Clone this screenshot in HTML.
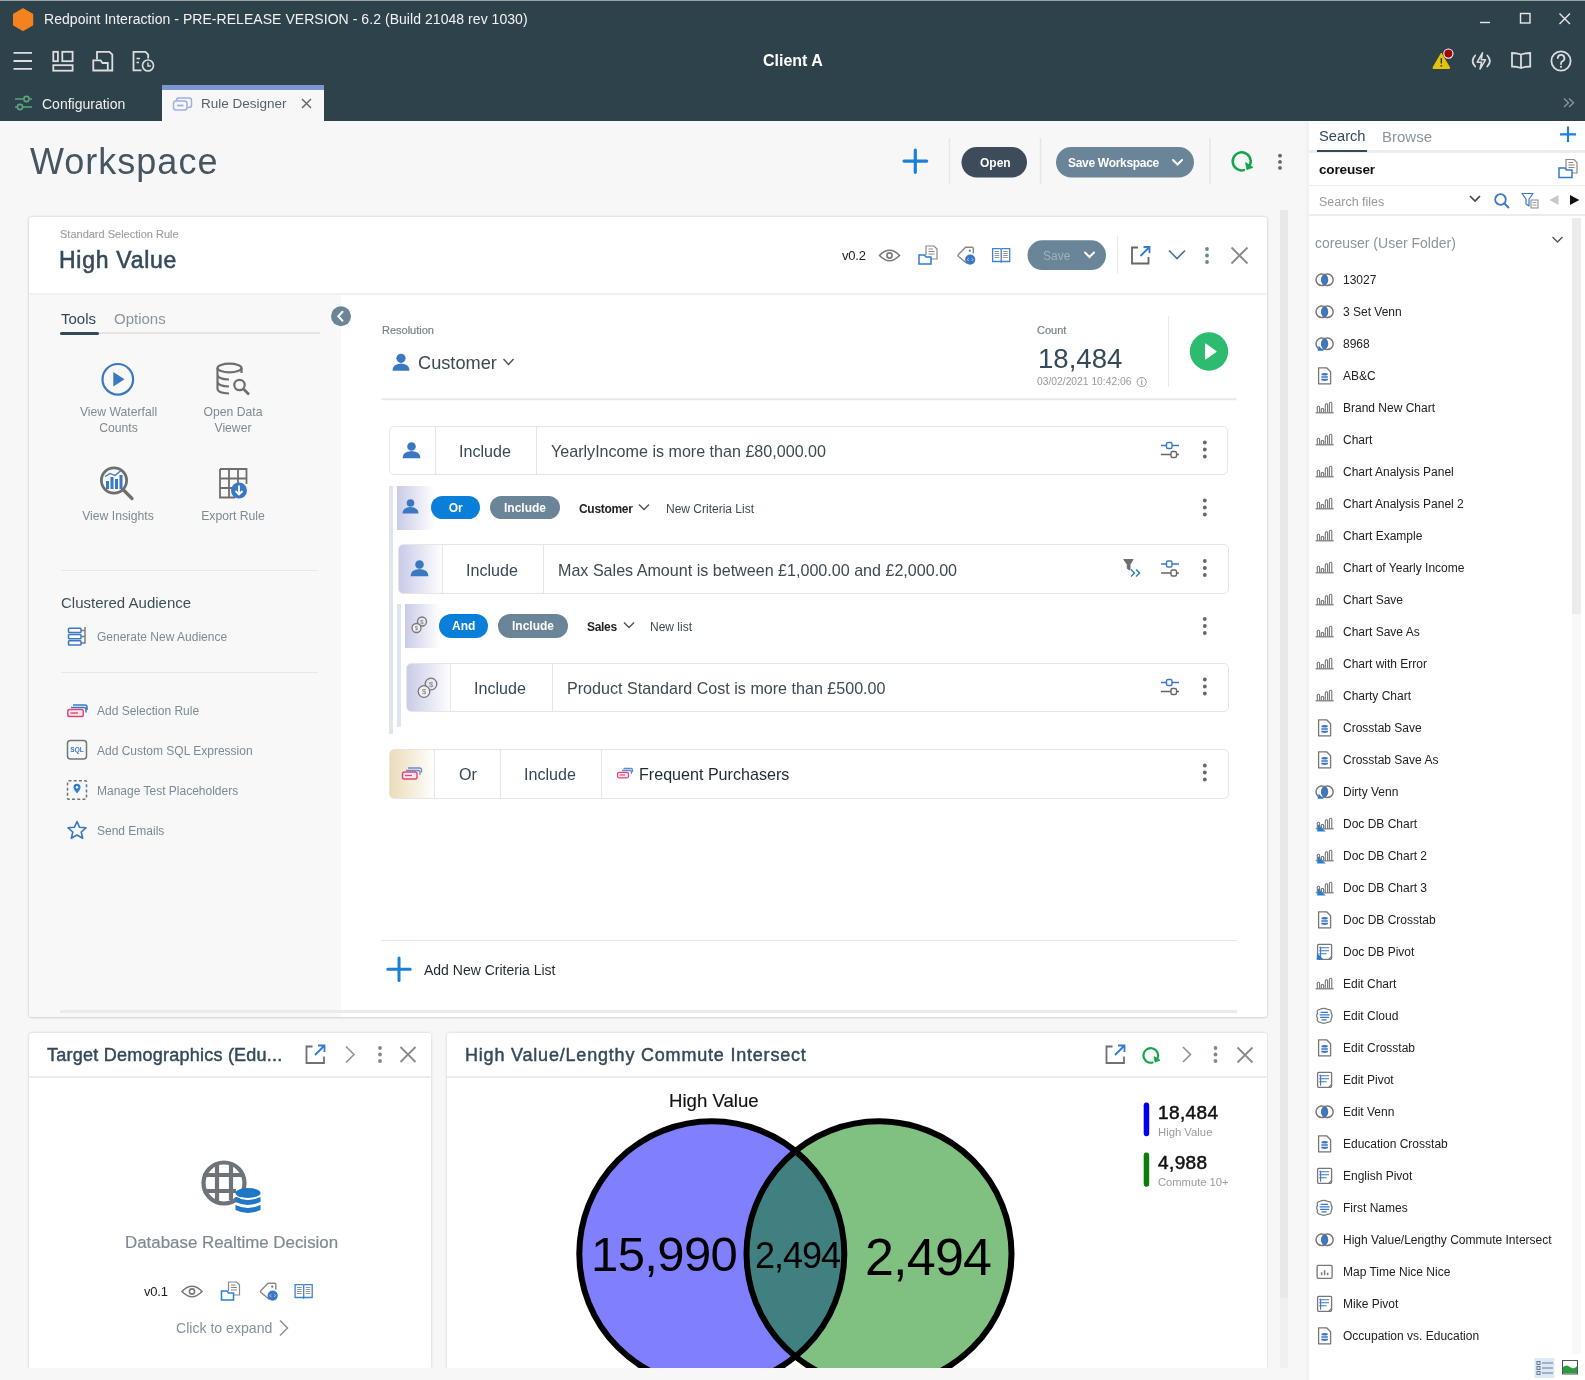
<!DOCTYPE html>
<html><head><meta charset="utf-8">
<style>
*{margin:0;padding:0;box-sizing:border-box}
html,body{width:1585px;height:1380px;overflow:hidden;background:#f7f7f7;font-family:"Liberation Sans",sans-serif}
.a{position:absolute}
.t{position:absolute;white-space:nowrap;line-height:1;will-change:transform}
svg{position:absolute;overflow:visible}
</style></head><body>
<!-- HEADER -->
<div class="a" style="left:0;top:0;width:1585px;height:121px;background:#2e424b"></div>
<div class="a" style="left:0;top:0;width:1585px;height:1px;background:#9aa3a8"></div>

<svg style="left:0;top:0" width="40" height="40"><path d="M23 8.8 L32.6 14.3 L32.6 25 L23 30.4 L13.6 25 L13.6 14.3 Z" fill="#f5821f" stroke="#f5821f" stroke-width="1.2" stroke-linejoin="round"/></svg>
<div class="t" style="left:43.5px;top:11.8px;font-size:14px;color:#f2f2f2;letter-spacing:0.05px">Redpoint Interaction - PRE-RELEASE VERSION - 6.2 (Build 21048 rev 1030)</div>
<svg style="left:0;top:0" width="1585" height="40"><g stroke="#e8e8e8" stroke-width="1.4" fill="none"><path d="M1480 22.5 H1490"/><rect x="1520.5" y="13.5" width="9.5" height="9.5"/><path d="M1559.5 13.5 L1570 24 M1570 13.5 L1559.5 24"/></g></svg>
<!-- toolbar icons left -->
<svg style="left:0;top:0" width="200" height="85"><g stroke="#dedede" stroke-width="1.8" fill="none">
<path d="M13.5 52.8 H32 M13.5 61 H32 M13.5 68.8 H32"/>
<rect x="53.3" y="51.8" width="4.6" height="9.4"/><rect x="62.3" y="51.8" width="10.3" height="9.4"/><rect x="53.3" y="65.2" width="19.3" height="5.5"/>
<path d="M97 59.5 V51.8 H109.5 L112.3 54.6 V70.5 H108.5"/><path d="M93.3 70.5 V60.3 H100.5 L102.5 63 H107.8 V70.5 Z"/>
<path d="M141.5 70.3 H133.5 V51.8 H145.5 L148.2 54.5 V58.5"/><path d="M136.5 58.5 H140 M136.5 62.5 H139" stroke-width="1.5"/><circle cx="148" cy="65.5" r="5.5" stroke-width="1.6"/><path d="M148 62.5 V66 H150.8" stroke-width="1.4"/>
</g></svg>
<div class="t" style="left:763px;top:52.5px;font-size:16px;color:#fff;font-weight:bold">Client A</div>
<!-- right toolbar icons -->
<svg style="left:0;top:0" width="1585" height="85">
<path d="M1441.3 53.5 L1449.3 67.3 Q1449.8 68.5 1448.5 68.5 H1434.1 Q1432.8 68.5 1433.3 67.3 Z" fill="#e3c30c" stroke="#e3c30c" stroke-width="1.2" stroke-linejoin="round"/>
<path d="M1441.3 58 V63.5" stroke="#2e424b" stroke-width="1.5"/><circle cx="1441.3" cy="65.8" r="0.9" fill="#2e424b"/>
<circle cx="1448.4" cy="53.6" r="4.6" fill="#a50000" stroke="#fff" stroke-width="1.1"/>
<g stroke="#dcdcdc" stroke-width="1.8" fill="none" stroke-linecap="round">
<path d="M1475.2 55.5 Q1470 61 1475.2 66.5 M1487.3 55.5 Q1492.5 61 1487.3 66.5"/>
<path d="M1482.5 52.8 L1477.2 62.2 H1481.6 L1480 69 L1485.5 59.8 H1481.2 Z" stroke-width="1.5" stroke-linejoin="round"/>
<path d="M1521 54.5 Q1517 53 1512 53 V66.5 Q1517 66.5 1521 68 Q1525 66.5 1530.2 66.5 V53 Q1525 53 1521 54.5 V68"/>
<circle cx="1561" cy="61" r="9.6"/><path d="M1557.8 58 A3.3 3.3 0 1 1 1562.3 61.3 Q1561 62 1561 64"/></g>
<circle cx="1561" cy="66.8" r="1.1" fill="#dcdcdc"/>
</svg>

<!-- TABS -->

<svg style="left:0;top:0" width="40" height="120"><g stroke="#5fa37f" stroke-width="1.6" fill="none"><path d="M15 99 H23 M29.5 99 H32 M15 107 H17 M23 107 H32"/><circle cx="26.5" cy="99" r="2.6"/><circle cx="20" cy="107" r="2.6"/></g></svg>
<div class="t" style="left:42px;top:96.5px;font-size:14px;color:#f0f0f0">Configuration</div>
<div class="a" style="left:162px;top:85px;width:162px;height:36px;background:#f7f7f7;border-top:5px solid #7b96d4"></div>
<svg style="left:0;top:0" width="340" height="120"><g stroke="#9fb2e3" stroke-width="1.5" fill="none"><rect x="173.5" y="101" width="13.5" height="9" rx="2.5"/><path d="M177 98 H189 Q191.5 98 191.5 100.5 V105 Q191.5 107.5 189 107.5 H187.5 M176.5 101 V100.5 Q176.5 98 179 98"/><path d="M177 105.5 H183.5" stroke-width="1.8"/></g></svg>
<div class="t" style="left:200.5px;top:96.8px;font-size:13.5px;color:#56636c">Rule Designer</div>
<svg style="left:0;top:0" width="340" height="120"><path d="M302 99 L311 108 M311 99 L302 108" stroke="#6a6a6a" stroke-width="1.5"/></svg>
<svg style="left:0;top:0" width="1585" height="120"><path d="M1564 98.5 L1568.5 102.8 L1564 107 M1569 98.5 L1573.5 102.8 L1569 107" stroke="#8a959c" stroke-width="1.4" fill="none"/></svg>

<!-- MAIN -->

<div class="t" style="left:30px;top:144.3px;font-size:36px;color:#455662;letter-spacing:1px">Workspace</div>
<svg style="left:0;top:0" width="1300" height="200">
<path d="M915.3 150 V172.3 M904 161.1 H926.7" stroke="#1a80d8" stroke-width="3.2" stroke-linecap="round"/>
<path d="M949.5 138 V184 M1040.5 138 V184 M1210 138 V184" stroke="#e6e6e6" stroke-width="1.5"/>
<rect x="961.5" y="147" width="65.5" height="30.5" rx="15.25" fill="#3e4b5a"/>
<rect x="1056" y="147" width="138" height="30.5" rx="15.25" fill="#6a8597"/>
<path d="M1173 160 L1177.5 164.5 L1182 160" stroke="#fff" stroke-width="2" fill="none" stroke-linecap="round"/>
<path d="M1243.9 170.1 A9 9 0 1 1 1250.1 164.6" stroke="#12a64c" stroke-width="2.5" fill="none" stroke-linecap="round"/>
<path d="M1245.6 162.6 L1253 167.4 L1246.8 169.6 Z" fill="#12a64c" stroke="#12a64c" stroke-width="0.8" stroke-linejoin="round"/>
<circle cx="1280" cy="155.7" r="1.9" fill="#666"/><circle cx="1280" cy="161.9" r="1.9" fill="#666"/><circle cx="1280" cy="167.9" r="1.9" fill="#666"/>
</svg>
<div class="t" style="left:980px;top:157px;font-size:12px;color:#fff;font-weight:bold">Open</div>
<div class="t" style="left:1068px;top:157px;font-size:12px;letter-spacing:-0.3px;color:#fff;font-weight:bold">Save Workspace</div>
<!-- CARD -->
<div class="a" style="left:29px;top:217px;width:1238px;height:800px;background:#fff;border-radius:3px;box-shadow:0 0 3px rgba(0,0,0,.18),0 1px 2px rgba(0,0,0,.08)"></div>
<div class="a" style="left:29px;top:293px;width:312px;height:724px;background:#f8f8f8;border-top:2px solid #f1f1f1;border-radius:0 0 0 3px"></div>
<div class="a" style="left:341px;top:293px;width:926px;height:2px;background:#f1f1f1"></div>
<div class="t" style="left:60px;top:228.5px;font-size:11px;color:#a0a0a0;-webkit-text-stroke:0.15px #a0a0a0">Standard Selection Rule</div>
<div class="t" style="left:59px;top:249.3px;font-size:23px;color:#34495a;-webkit-text-stroke:0.55px #34495a;letter-spacing:0.72px">High Value</div>

<div class="a" style="left:1279.8px;top:210px;width:8px;height:1088px;background:#e8e8e8"></div>
<div class="a" style="left:1279.8px;top:1298px;width:8px;height:70px;background:#f0f0f0"></div>
<div class="t" style="left:842.3px;top:249.3px;font-size:13px;color:#222;letter-spacing:-0.2px">v0.2</div>
<svg style="left:0;top:0" width="1300" height="300">
<g id="vicons"><g fill="none" stroke="#7a7a7a" stroke-width="1.6"><path d="M879.5 255.5 Q889.5 245 899.5 255.5 Q889.5 266 879.5 255.5 Z"/><circle cx="889.5" cy="255.5" r="2.6"/></g>
<g fill="none" stroke="#888" stroke-width="1.2"><path d="M926 255 V246 H934 L937 249 V259 H931 M928.5 249 H933 M928.5 251.5 H934.5 M928.5 254 H934.5"/></g>
<path d="M919 264 V255 H924.5 L926 257 H931 V264 Z" fill="#fff" stroke="#2f7dd0" stroke-width="1.5"/>
<path d="M967 263.5 L958.5 256.5 Q957.5 255.5 958.5 254.5 L965.5 247.3 H972 Q973.3 247.3 973.3 248.6 V253.5" fill="none" stroke="#888" stroke-width="1.4" stroke-linejoin="round"/><circle cx="969.8" cy="250.7" r="1.1" fill="#777"/>
<circle cx="970.2" cy="259.6" r="5.1" fill="#3a78c6"/><path d="M968.6 258.3 L967.4 259.6 L968.6 260.9 M971.8 258.3 L973 259.6 L971.8 260.9" stroke="#dfe9f7" stroke-width="0.8" fill="none"/>
<g fill="none" stroke="#3a84d4" stroke-width="1.3"><path d="M992.6 248.6 H1000.2 Q1001.2 248.6 1001.2 249.6 V261.5 H992.6 Z M1001.2 249.6 Q1001.2 248.6 1002.2 248.6 H1009.7 V261.5 H1001.2"/><path d="M994.5 251.5 H999.2 M994.5 253.5 H999.2 M994.5 255.5 H999.2 M994.5 257.5 H999.2 M1003.2 251.5 H1007.8 M1003.2 253.5 H1007.8 M1003.2 255.5 H1007.8 M1003.2 257.5 H1007.8" stroke="#888" stroke-width="0.9"/></g><path d="M999.8 261.5 L1001.2 263 L1002.6 261.5" fill="#3a84d4"/></g>
<rect x="1027.5" y="240.3" width="78.5" height="29.7" rx="14.85" fill="#6a8597"/>
<path d="M1085 252.5 L1089.5 257 L1094 252.5" stroke="#fff" stroke-width="2" fill="none" stroke-linecap="round"/>
<path d="M1117.5 236 V273.5" stroke="#e8e8e8" stroke-width="1"/>
<g fill="none" stroke="#666" stroke-width="1.8"><path d="M1138 247.5 H1132 V263.5 H1148.5 V257"/></g>
<path d="M1140.5 256 L1149 247.5 M1143.5 247 H1149.5 V253" fill="none" stroke="#2f7dd0" stroke-width="1.8"/>
<path d="M1169 250.5 L1177 258.5 L1185 250.5" fill="none" stroke="#4f6f8f" stroke-width="1.7"/>
<circle cx="1207" cy="249" r="1.9" fill="#6a8597"/><circle cx="1207" cy="255.5" r="1.9" fill="#6a8597"/><circle cx="1207" cy="262" r="1.9" fill="#6a8597"/>
<path d="M1231.5 247.5 L1247.5 263.5 M1247.5 247.5 L1231.5 263.5" stroke="#8a8a8a" stroke-width="1.8"/>
</svg>
<div class="t" style="left:1043px;top:250px;font-size:12px;color:#9fb1bd">Save</div>


<div class="t" style="left:61px;top:310.5px;font-size:15px;color:#34495a">Tools</div>
<div class="t" style="left:114px;top:310.5px;font-size:15px;color:#8a959e">Options</div>
<div class="a" style="left:60px;top:331.5px;width:260px;height:2.5px;background:#e4e4e4"></div>
<div class="a" style="left:60px;top:331.5px;width:39px;height:3px;background:#34495a;border-radius:1.5px"></div>
<svg style="left:0;top:0" width="360" height="1020">
<circle cx="341" cy="316.3" r="10" fill="#6a8597"/><path d="M342.5 311.8 L338.3 316.3 L342.5 320.8" stroke="#fff" stroke-width="2" fill="none" stroke-linecap="round"/>
<circle cx="117.8" cy="379.3" r="15.3" fill="none" stroke="#3b78c2" stroke-width="2.2"/><path d="M113.3 372 L124.5 379.3 L113.3 386.6 Z" fill="#3b78c2"/>
<g fill="none" stroke="#6e6e6e" stroke-width="2.2">
<ellipse cx="229.5" cy="368" rx="12" ry="4.3"/><path d="M217.5 368 V389 Q217.5 393 229 393.5 M217.5 375 Q218 379 229 379.5 M217.5 382 Q218 386 229 386.5 M241.5 368 V373"/>
<circle cx="239.5" cy="385" r="5.2"/><path d="M243.5 389 L249 394.5" stroke-width="2.6"/>
<circle cx="114" cy="480.5" r="12.6" stroke-width="2.8"/><path d="M123 489.5 L132 498.5" stroke-width="3.2" stroke-linecap="round"/>
<path d="M220 469 H246.5 V484 M220 469 V497.5 H235 M220 478.5 H246.5 M220 488 H235 M229 469 V497.5 M238 469 V484" stroke-width="1.8"/>
</g>
<g fill="#3b78c2"><rect x="106" y="481" width="3" height="8"/><rect x="110.5" y="477" width="3" height="12"/><rect x="115" y="479" width="3" height="10"/><rect x="119.5" y="475" width="3" height="14"/></g>
<path d="M105 476.5 L110 473.5 L115 475.5 L121 470.5" stroke="#3b78c2" stroke-width="1.3" fill="none"/>
<circle cx="239" cy="490.5" r="8" fill="#3b78c2"/><path d="M239 485.5 V494.5 M235.5 491 L239 494.5 L242.5 491" stroke="#fff" stroke-width="1.8" fill="none"/>
</svg>
<div class="t" style="left:78.5px;top:403.5px;font-size:12.2px;color:#7d8a94;text-align:center;width:79px;line-height:16px">View Waterfall<br>Counts</div>
<div class="t" style="left:193px;top:403.5px;font-size:12.2px;color:#7d8a94;text-align:center;width:80px;line-height:16px">Open Data<br>Viewer</div>
<div class="t" style="left:68px;top:509.5px;font-size:12.2px;color:#7d8a94;text-align:center;width:100px">View Insights</div>
<div class="t" style="left:183px;top:509.5px;font-size:12.2px;color:#7d8a94;text-align:center;width:100px">Export Rule</div>
<div class="a" style="left:61px;top:569.5px;width:257px;height:1.5px;background:#e8e8e8"></div>
<div class="t" style="left:61px;top:594.5px;font-size:15px;color:#3d4f5b">Clustered Audience</div>
<div class="a" style="left:61px;top:671.5px;width:257px;height:1.5px;background:#e8e8e8"></div>
<div class="t" style="left:97px;top:631.2px;font-size:12px;color:#7d8a94">Generate New Audience</div>
<div class="t" style="left:97px;top:704.7px;font-size:12px;color:#7d8a94">Add Selection Rule</div>
<div class="t" style="left:97px;top:744.7px;font-size:12px;color:#7d8a94">Add Custom SQL Expression</div>
<div class="t" style="left:97px;top:784.7px;font-size:12px;color:#7d8a94">Manage Test Placeholders</div>
<div class="t" style="left:97px;top:824.7px;font-size:12px;color:#7d8a94">Send Emails</div>
<svg style="left:0;top:0" width="360" height="1020">
<g fill="none" stroke="#3b78c2" stroke-width="1.5">
<rect x="68.5" y="628.3" width="12.5" height="4.3" rx="0.8"/><rect x="68.5" y="634.5" width="12.5" height="4.3" rx="0.8"/><rect x="68.5" y="640.7" width="12.5" height="4.3" rx="0.8"/><path d="M81 630.5 H85 V643 H81 M85 636.5 H81 M85 627 V630.5" stroke="#7a7f84"/>
<path d="M71 707.5 H84 Q86 707.5 86 709.5 V712.5 M73 705 H85 Q87 705 87 707 V710"/>
</g>
<rect x="67.8" y="709.5" width="15.5" height="7" rx="1.8" fill="#fde8ee" stroke="#e0457b" stroke-width="1.5"/><path d="M70.5 713 H78" stroke="#e0457b" stroke-width="1.4"/>
<rect x="67.5" y="740.5" width="19" height="18.5" rx="3" fill="none" stroke="#6f757a" stroke-width="1.5"/>
<text x="77" y="752.3" font-size="6.5" font-weight="bold" fill="#3b78c2" text-anchor="middle" font-family="Liberation Sans">SQL</text>
<rect x="67.5" y="780.8" width="19" height="18.5" rx="1" fill="none" stroke="#6f757a" stroke-width="1.5" stroke-dasharray="3 2.2"/>
<path d="M77 793.5 Q73.5 789.5 73.5 787.3 A3.5 3.5 0 0 1 80.5 787.3 Q80.5 789.5 77 793.5 Z" fill="#2f7dd0"/><circle cx="77" cy="787.3" r="1.2" fill="#fff"/>
<path d="M77 821.5 L79.6 827.3 L86 827.8 L81.2 832 L82.7 838.3 L77 835 L71.3 838.3 L72.8 832 L68 827.8 L74.4 827.3 Z" fill="none" stroke="#3b78c2" stroke-width="1.6" stroke-linejoin="round"/>
</svg>
<div class="a" style="left:60px;top:1010px;width:1177px;height:3px;background:#ebebeb"></div>


<div class="t" style="left:381.5px;top:324.5px;font-size:11px;color:#77838d;-webkit-text-stroke:0.2px #77838d">Resolution</div>
<svg style="left:0;top:0" width="1300" height="1000">
<g fill="#3b78c2"><circle cx="401" cy="358.3" r="4.6"/><path d="M392.5 370.8 Q392.5 364 401 363.5 Q409.5 364 409.5 370.8 Z"/></g>
<path d="M503.5 359 L508.5 364.5 L513.5 359" stroke="#555" stroke-width="1.5" fill="none"/>
<path d="M381.5 399.3 H1236.5" stroke="#e8e8e8" stroke-width="2"/>
<path d="M1168.6 316 V386.8" stroke="#e8e8e8" stroke-width="1"/>
<circle cx="1209" cy="351.5" r="19.2" fill="#2dbb6f"/><path d="M1205.5 343.8 L1216.3 351.5 L1205.5 359.2 Z" fill="#fff" stroke="#fff" stroke-width="1" stroke-linejoin="round"/>
<circle cx="1141.7" cy="382" r="4.6" fill="none" stroke="#999" stroke-width="1"/><path d="M1141.7 380.5 V385" stroke="#999" stroke-width="1.1"/><circle cx="1141.7" cy="379" r="0.6" fill="#999"/>
</svg>
<div class="t" style="left:417.5px;top:354px;font-size:18.2px;color:#3a4a56">Customer</div>
<div class="t" style="left:1037.3px;top:324.8px;font-size:11px;color:#77838d;-webkit-text-stroke:0.2px #77838d">Count</div>
<div class="t" style="left:1037.5px;top:344.5px;font-size:27.6px;color:#34495a">18,484</div>
<div class="t" style="left:1037.3px;top:377.3px;font-size:10.3px;color:#9a9a9a">03/02/2021 10:42:06</div>

<!-- row 1 -->
<div class="a" style="left:389.2px;top:425.5px;width:839.3px;height:49.5px;border:1px solid #e6e6e6;border-radius:5px;background:#fff"></div>
<div class="a" style="left:434.5px;top:426px;width:1px;height:48.5px;background:#e6e6e6"></div>
<div class="a" style="left:535.5px;top:426px;width:1px;height:48.5px;background:#e6e6e6"></div>
<div class="t" style="left:458.5px;top:443.2px;font-size:16.1px;color:#34495a">Include</div>
<div class="t" style="left:550.5px;top:443.2px;font-size:16.1px;color:#3d4a55">YearlyIncome is more than £80,000.00</div>

<!-- group bars -->
<div class="a" style="left:389.3px;top:486px;width:3.6px;height:248px;background:#dfe5ee"></div>
<div class="a" style="left:397.4px;top:604px;width:3.4px;height:123px;background:#dfe5ee"></div>

<!-- row 2 header -->
<div class="a" style="left:397px;top:486px;width:38px;height:44px;background:linear-gradient(90deg,#c9cbe8,#fff)"></div>
<div class="a" style="left:430.8px;top:495.8px;width:49.5px;height:23.6px;border-radius:12px;background:#0a7fd9"></div>
<div class="a" style="left:490px;top:495.8px;width:70px;height:23.6px;border-radius:12px;background:#6a8597"></div>
<div class="t" style="left:430.8px;top:502.3px;width:49.5px;text-align:center;font-size:12px;color:#fff;font-weight:bold">Or</div>
<div class="t" style="left:490px;top:502.3px;width:70px;text-align:center;font-size:12px;color:#fff;font-weight:bold">Include</div>
<div class="t" style="left:578.5px;top:502.5px;font-size:12px;color:#222;font-weight:bold;letter-spacing:-0.3px">Customer</div>
<div class="t" style="left:665.5px;top:502.5px;font-size:12px;color:#3d4a55">New Criteria List</div>

<!-- row 3 -->
<div class="a" style="left:397.8px;top:543.5px;width:831px;height:50px;border:1px solid #e6e6e6;border-radius:5px;background:#fff;overflow:hidden"><div class="a" style="left:0;top:0;width:44px;height:50px;background:linear-gradient(90deg,#c9cbe8,#fff)"></div></div>
<div class="a" style="left:441.9px;top:544px;width:1px;height:49px;background:#e6e6e6"></div>
<div class="a" style="left:543.2px;top:544px;width:1px;height:49px;background:#e6e6e6"></div>
<div class="t" style="left:466.3px;top:561.7px;font-size:16.1px;color:#34495a">Include</div>
<div class="t" style="left:558.3px;top:561.7px;font-size:16.1px;color:#3d4a55">Max Sales Amount is between £1,000.00 and £2,000.00</div>

<!-- row 4 header -->
<div class="a" style="left:405px;top:604.2px;width:35px;height:43.5px;background:linear-gradient(90deg,#c9cbe8,#fff)"></div>
<div class="a" style="left:438.6px;top:613.6px;width:49.4px;height:24px;border-radius:12px;background:#0a7fd9"></div>
<div class="a" style="left:498px;top:613.6px;width:70px;height:24px;border-radius:12px;background:#6a8597"></div>
<div class="t" style="left:438.6px;top:620.3px;width:49.4px;text-align:center;font-size:12px;color:#fff;font-weight:bold">And</div>
<div class="t" style="left:498px;top:620.3px;width:70px;text-align:center;font-size:12px;color:#fff;font-weight:bold">Include</div>
<div class="t" style="left:586.7px;top:620.5px;font-size:12px;color:#222;font-weight:bold;letter-spacing:-0.3px">Sales</div>
<div class="t" style="left:650.3px;top:620.5px;font-size:12px;color:#3d4a55">New list</div>

<!-- row 5 -->
<div class="a" style="left:405.8px;top:662.5px;width:823px;height:49.5px;border:1px solid #e6e6e6;border-radius:5px;background:#fff;overflow:hidden"><div class="a" style="left:0;top:0;width:44px;height:50px;background:linear-gradient(90deg,#c9cbe8,#fff)"></div></div>
<div class="a" style="left:450.3px;top:663px;width:1px;height:48.5px;background:#e6e6e6"></div>
<div class="a" style="left:551.6px;top:663px;width:1px;height:48.5px;background:#e6e6e6"></div>
<div class="t" style="left:474.3px;top:680.2px;font-size:16.1px;color:#34495a">Include</div>
<div class="t" style="left:566.7px;top:680.2px;font-size:16.1px;color:#3d4a55">Product Standard Cost is more than £500.00</div>

<!-- row 6 -->
<div class="a" style="left:389.4px;top:748.5px;width:839.5px;height:50px;border:1px solid #e6e6e6;border-radius:5px;background:#fff;overflow:hidden"><div class="a" style="left:0;top:0;width:45px;height:50px;background:linear-gradient(90deg,#ecdcb8,#fff)"></div></div>
<div class="a" style="left:434.2px;top:749px;width:1px;height:49px;background:#e6e6e6"></div>
<div class="a" style="left:499.8px;top:749px;width:1px;height:49px;background:#e6e6e6"></div>
<div class="a" style="left:600.8px;top:749px;width:1px;height:49px;background:#e6e6e6"></div>
<div class="t" style="left:458.6px;top:766.2px;font-size:16.1px;color:#34495a">Or</div>
<div class="t" style="left:523.8px;top:766.2px;font-size:16.1px;color:#34495a">Include</div>
<div class="t" style="left:639.2px;top:766.2px;font-size:16.1px;color:#1f2a33">Frequent Purchasers</div>

<svg style="left:0;top:0" width="1300" height="1000">
<!-- person icons -->
<g fill="#3b78c2"><circle cx="411.5" cy="446.5" r="4.3"/><path d="M402.5 458.3 Q402.5 451.5 411.5 451 Q420.5 451.5 420.5 458.3 Z"/>
<circle cx="410.5" cy="503" r="3.8"/><path d="M402.5 513.5 Q402.5 507.5 410.5 507 Q418.5 507.5 418.5 513.5 Z"/>
<circle cx="419.5" cy="564.5" r="4.3"/><path d="M410.5 576.3 Q410.5 569.5 419.5 569 Q428.5 569.5 428.5 576.3 Z"/></g>
<!-- coins -->
<g fill="none" stroke="#777" stroke-width="1.3"><circle cx="422" cy="621.5" r="4.5"/><circle cx="416.5" cy="628" r="4.5" fill="#f0f0f4"/>
<circle cx="431" cy="684" r="5.8"/><circle cx="424" cy="691.5" r="5.8" fill="#f0f0f4"/></g>
<g font-family="Liberation Sans" font-size="6" fill="#777" text-anchor="middle"><text x="422" y="623.7">$</text><text x="416.5" y="630.2">$</text></g>
<g font-family="Liberation Sans" font-size="7.5" fill="#777" text-anchor="middle"><text x="431" y="686.7">$</text><text x="424" y="694.2">$</text></g>
<!-- selection rule icons -->
<g fill="none" stroke="#6b8bd0" stroke-width="1.3"><path d="M406 770.5 H418 Q420 770.5 420 772.5 V775 M408 768 H419.5 Q421.5 768 421.5 770 V772.5"/>
<path d="M622 770.5 H630 Q631.5 770.5 631.5 772 V774 M623.5 768.5 H631 Q632.5 768.5 632.5 770 V772"/></g>
<rect x="402.5" y="772" width="14.5" height="7" rx="1.8" fill="#fde8ee" stroke="#e0457b" stroke-width="1.4"/><path d="M405 775.5 H412" stroke="#e0457b" stroke-width="1.3"/>
<rect x="617.5" y="772.3" width="11" height="5.5" rx="1.5" fill="#fde8ee" stroke="#e0457b" stroke-width="1.2"/><path d="M619.5 775 H625" stroke="#e0457b" stroke-width="1.1"/>
<!-- chevrons -->
<path d="M639 504.5 L644 509.5 L649 504.5" stroke="#555" stroke-width="1.5" fill="none"/>
<path d="M624 622.5 L629 627.5 L634 622.5" stroke="#555" stroke-width="1.5" fill="none"/>
<!-- sliders -->
<g id="sl"><path d="M1161 445.5 H1166.5 M1172 445.5 H1179" stroke="#3b78c2" stroke-width="1.5"/><rect x="1166.5" y="442.5" width="5.5" height="6" rx="1.5" fill="none" stroke="#3b78c2" stroke-width="1.4"/>
<path d="M1161 454.5 H1171 M1176.5 454.5 H1179" stroke="#666" stroke-width="1.5"/><rect x="1171" y="451.5" width="5.5" height="6" rx="1.5" fill="none" stroke="#666" stroke-width="1.4"/></g>
<use href="#sl" y="118.5"/><use href="#sl" y="237"/>
<!-- kebabs -->
<g id="kb" fill="#666"><circle cx="1204.8" cy="442.5" r="1.9"/><circle cx="1204.8" cy="449.5" r="1.9"/><circle cx="1204.8" cy="456.5" r="1.9"/></g>
<use href="#kb" y="58"/><use href="#kb" y="118.5"/><use href="#kb" y="176.5"/><use href="#kb" y="237"/><use href="#kb" y="323"/>
<!-- filter -->
<path d="M1123.7 559.5 H1133 L1130 564.5 V570 L1127.3 568.5 V564.5 Z" fill="#6e6e6e" stroke="#6e6e6e" stroke-width="1" stroke-linejoin="round"/>
<path d="M1131 569.5 L1134.5 573 L1131 576.5 M1136 569.5 L1139.5 573 L1136 576.5" stroke="#3b78c2" stroke-width="1.5" fill="none"/>
</svg>
<!-- add new criteria -->
<div class="a" style="left:381px;top:939.5px;width:856px;height:1.5px;background:#e8e8e8"></div>
<svg style="left:0;top:0" width="500" height="1000"><path d="M399 958 V980.5 M387.8 969.3 H410.2" stroke="#1a80d8" stroke-width="3" stroke-linecap="round"/></svg>
<div class="t" style="left:424px;top:962.5px;font-size:14px;color:#1f2a33">Add New Criteria List</div>


<!-- RIGHT PANEL -->

<div class="a" style="left:1290px;top:121px;width:19px;height:1259px;background:linear-gradient(90deg,#f7f7f7 0,#f7f7f7 14px,#eef0f2 19px)"></div>
<div class="a" style="left:1309px;top:121px;width:276px;height:1259px;background:#fff"></div>
<div class="t" style="left:1318.5px;top:128.5px;font-size:14.7px;color:#34495a">Search</div>
<div class="t" style="left:1382px;top:128.5px;font-size:15px;color:#8a959e">Browse</div>
<div class="a" style="left:1309px;top:149.8px;width:276px;height:2.8px;background:#ececec"></div>
<div class="a" style="left:1317.4px;top:149.8px;width:50px;height:2px;background:#34495a"></div>
<div class="t" style="left:1318.5px;top:162.8px;font-size:13.6px;color:#111;font-weight:bold;letter-spacing:-0.2px">coreuser</div>
<div class="a" style="left:1309px;top:184.5px;width:276px;height:1.5px;background:#ececec"></div>
<div class="t" style="left:1319px;top:195.5px;font-size:12.5px;color:#9a9a9a">Search files</div>
<div class="a" style="left:1309px;top:214px;width:276px;height:1.5px;background:#ececec"></div>
<div class="a" style="left:1572px;top:218px;width:8.5px;height:396px;background:#ebebeb"></div>
<div class="a" style="left:1572px;top:614px;width:8.5px;height:740px;background:#f8f8f8"></div>
<div class="t" style="left:1315px;top:235.5px;font-size:14px;color:#8a959e">coreuser (User Folder)</div>

<svg style="left:0;top:0" width="1585" height="1380">

<defs>
<g id="i_venn"><circle cx="-2.8" cy="0" r="5.8" fill="none" stroke="#777" stroke-width="1.5"/><circle cx="2.8" cy="0" r="5.8" fill="none" stroke="#777" stroke-width="1.5"/><path d="M0 -4.9 A5.8 5.8 0 0 1 0 4.9 A5.8 5.8 0 0 1 0 -4.9 Z" fill="#3b78c2"/><ellipse cx="0" cy="0" rx="3.3" ry="5" fill="#3b78c2"/></g>
<g id="i_venn_db"><use href="#i_venn"/><path d="M-6 2 L-1 7 H-7 Z" fill="#2f7dd0"/></g>
<g id="i_xtab"><path d="M-6 -8 H2 L6 -4 V8 H-6 Z" fill="#fff" stroke="#777" stroke-width="1.3" stroke-linejoin="round"/><ellipse cx="0" cy="-1.5" rx="3.3" ry="1.3" fill="#3b78c2"/><path d="M-3.3 0.5 H3.3 V2 H-3.3 Z M-3.3 3 H3.3 V4.5 Q0 5.8 -3.3 4.5 Z" fill="#3b78c2"/></g>
<g id="i_chart"><path d="M-9 5 H9" stroke="#777" stroke-width="1.2"/><path d="M-7.3 4.8 V-0.5 Q-7.3 -1.5 -6.2 -1.5 Q-5 -1.5 -5 -0.5 V4.8 M-3.3 4.8 V1.5 Q-3.3 0.5 -2.2 0.5 Q-1 0.5 -1 1.5 V4.8 M0.7 4.8 V-3 Q0.7 -4 1.8 -4 Q3 -4 3 -3 V4.8 M4.8 4.8 V-4.5 Q4.8 -5.5 6 -5.5 Q7.2 -5.5 7.2 -4.5 V4.8" fill="none" stroke="#777" stroke-width="1.1"/></g>
<g id="i_chart_db"><use href="#i_chart"/><path d="M-6.5 0.5 L1 7.8 H-7.5 Z" fill="#2f7dd0"/></g>
<g id="i_pivot"><rect x="-7" y="-7.5" width="14" height="15" rx="1" fill="#fff" stroke="#777" stroke-width="1.3"/><path d="M-4 -5 V6 M-5.5 -4 H4.5 M-5.5 -1 H4.5 M-5.5 2 H2" stroke="#3b78c2" stroke-width="1.1"/><path d="M4 7.5 L7 4.5" stroke="#777" stroke-width="1.2"/></g>
<g id="i_pivot_db"><use href="#i_pivot"/><path d="M-7.5 1 L-1 8 H-8 Z" fill="#2f7dd0"/></g>
<g id="i_cloud"><path d="M-4.5 -6.5 Q-1 -8.5 3 -6.5 Q7 -6.5 6.5 -3 Q8.5 0 6.5 3 Q7 6.5 3 6.5 Q-1 8.5 -4.5 6.5 Q-8.5 6 -7 2.5 Q-9 0 -7 -2.5 Q-8.5 -6 -4.5 -6.5 Z" fill="#fff" stroke="#777" stroke-width="1.2"/><path d="M-4 -3.5 H3.5 M-5 -1 H5 M-4.5 1.5 H4.5 M-3 4 H2" stroke="#3b78c2" stroke-width="1.2"/></g>
<g id="i_map"><rect x="-7.5" y="-6.5" width="15" height="13" rx="1.2" fill="#fff" stroke="#777" stroke-width="1.3"/><path d="M-3 3.5 V0.5 M0 3.5 V-1.5 M3 3.5 V1" stroke="#777" stroke-width="1.5"/></g>
</defs>

<path d="M1568 126.5 V142 M1560 134.3 H1576" stroke="#1a80d8" stroke-width="2.2"/>
<g fill="none" stroke="#888" stroke-width="1.2"><path d="M1566 169 V159.5 H1574 L1577 162.5 V173 H1571 M1568.5 162.5 H1573 M1568.5 165 H1574.5 M1568.5 167.5 H1574.5"/></g>
<path d="M1559 177.5 V168 H1565 L1566.5 170 H1572 V177.5 Z" fill="#fff" stroke="#2f7dd0" stroke-width="1.5"/>
<path d="M1470 196 L1475 201 L1480 196" stroke="#444" stroke-width="1.6" fill="none"/>
<circle cx="1500.5" cy="199.5" r="5.3" fill="none" stroke="#3b78c2" stroke-width="1.8"/><path d="M1504.5 203.5 L1509 208" stroke="#3b78c2" stroke-width="2"/>
<path d="M1522 193.5 H1533 L1529 199 V206 L1526 204 V199 Z" fill="none" stroke="#3b78c2" stroke-width="1.2" stroke-linejoin="round"/><rect x="1531" y="200" width="7" height="8" fill="#fff" stroke="#888" stroke-width="1"/><path d="M1532.5 202.5 H1536.5 M1532.5 205 H1536.5" stroke="#888" stroke-width="0.8"/>
<path d="M1558.5 195 L1549.5 200 L1558.5 205 Z" fill="#c8c8c8"/>
<path d="M1570 195 L1579.3 200 L1570 205 Z" fill="#111"/>
<path d="M1552.5 237 L1557.5 242 L1562.5 237" stroke="#555" stroke-width="1.4" fill="none"/>
<use href="#i_venn" x="1324.6" y="279.8"/>
<use href="#i_venn" x="1324.6" y="311.8"/>
<use href="#i_venn_db" x="1324.6" y="343.8"/>
<use href="#i_xtab" x="1324.6" y="375.8"/>
<use href="#i_chart" x="1324.6" y="407.8"/>
<use href="#i_chart" x="1324.6" y="439.8"/>
<use href="#i_chart" x="1324.6" y="471.8"/>
<use href="#i_chart" x="1324.6" y="503.8"/>
<use href="#i_chart" x="1324.6" y="535.8"/>
<use href="#i_chart" x="1324.6" y="567.8"/>
<use href="#i_chart" x="1324.6" y="599.8"/>
<use href="#i_chart" x="1324.6" y="631.8"/>
<use href="#i_chart" x="1324.6" y="663.8"/>
<use href="#i_chart" x="1324.6" y="695.8"/>
<use href="#i_xtab" x="1324.6" y="727.8"/>
<use href="#i_xtab" x="1324.6" y="759.8"/>
<use href="#i_venn_db" x="1324.6" y="791.8"/>
<use href="#i_chart_db" x="1324.6" y="823.8"/>
<use href="#i_chart_db" x="1324.6" y="855.8"/>
<use href="#i_chart_db" x="1324.6" y="887.8"/>
<use href="#i_xtab" x="1324.6" y="919.8"/>
<use href="#i_pivot_db" x="1324.6" y="951.8"/>
<use href="#i_chart" x="1324.6" y="983.8"/>
<use href="#i_cloud" x="1324.6" y="1015.8"/>
<use href="#i_xtab" x="1324.6" y="1047.8"/>
<use href="#i_pivot" x="1324.6" y="1079.8"/>
<use href="#i_venn" x="1324.6" y="1111.8"/>
<use href="#i_xtab" x="1324.6" y="1143.8"/>
<use href="#i_pivot" x="1324.6" y="1175.8"/>
<use href="#i_cloud" x="1324.6" y="1207.8"/>
<use href="#i_venn" x="1324.6" y="1239.8"/>
<use href="#i_map" x="1324.6" y="1271.8"/>
<use href="#i_pivot" x="1324.6" y="1303.8"/>
<use href="#i_xtab" x="1324.6" y="1335.8"/>
<rect x="1534.5" y="1358" width="20" height="20" fill="#dbe8f7"/>
<g stroke="#6a7a88" stroke-width="1" fill="none"><rect x="1537" y="1361.5" width="3" height="3"/><rect x="1537" y="1366.5" width="3" height="3"/><rect x="1537" y="1371.5" width="3" height="3"/><path d="M1542 1363 H1553 M1542 1368 H1553 M1542 1373 H1553"/></g>
<rect x="1562.5" y="1360.5" width="15" height="13.5" fill="#fff" stroke="#555" stroke-width="1"/><path d="M1563 1373.5 V1367 Q1567 1364 1570 1367 Q1574 1370 1577 1366 V1373.5 Z" fill="#2c9a3f"/>
</svg>
<div class="t" style="left:1343px;top:274.0px;font-size:12px;color:#222">13027</div>
<div class="t" style="left:1343px;top:306.0px;font-size:12px;color:#222">3 Set Venn</div>
<div class="t" style="left:1343px;top:338.0px;font-size:12px;color:#222">8968</div>
<div class="t" style="left:1343px;top:370.0px;font-size:12px;color:#222">AB&amp;C</div>
<div class="t" style="left:1343px;top:402.0px;font-size:12px;color:#222">Brand New Chart</div>
<div class="t" style="left:1343px;top:434.0px;font-size:12px;color:#222">Chart</div>
<div class="t" style="left:1343px;top:466.0px;font-size:12px;color:#222">Chart Analysis Panel</div>
<div class="t" style="left:1343px;top:498.0px;font-size:12px;color:#222">Chart Analysis Panel 2</div>
<div class="t" style="left:1343px;top:530.0px;font-size:12px;color:#222">Chart Example</div>
<div class="t" style="left:1343px;top:562.0px;font-size:12px;color:#222">Chart of Yearly Income</div>
<div class="t" style="left:1343px;top:594.0px;font-size:12px;color:#222">Chart Save</div>
<div class="t" style="left:1343px;top:626.0px;font-size:12px;color:#222">Chart Save As</div>
<div class="t" style="left:1343px;top:658.0px;font-size:12px;color:#222">Chart with Error</div>
<div class="t" style="left:1343px;top:690.0px;font-size:12px;color:#222">Charty Chart</div>
<div class="t" style="left:1343px;top:722.0px;font-size:12px;color:#222">Crosstab Save</div>
<div class="t" style="left:1343px;top:754.0px;font-size:12px;color:#222">Crosstab Save As</div>
<div class="t" style="left:1343px;top:786.0px;font-size:12px;color:#222">Dirty Venn</div>
<div class="t" style="left:1343px;top:818.0px;font-size:12px;color:#222">Doc DB Chart</div>
<div class="t" style="left:1343px;top:850.0px;font-size:12px;color:#222">Doc DB Chart 2</div>
<div class="t" style="left:1343px;top:882.0px;font-size:12px;color:#222">Doc DB Chart 3</div>
<div class="t" style="left:1343px;top:914.0px;font-size:12px;color:#222">Doc DB Crosstab</div>
<div class="t" style="left:1343px;top:946.0px;font-size:12px;color:#222">Doc DB Pivot</div>
<div class="t" style="left:1343px;top:978.0px;font-size:12px;color:#222">Edit Chart</div>
<div class="t" style="left:1343px;top:1010.0px;font-size:12px;color:#222">Edit Cloud</div>
<div class="t" style="left:1343px;top:1042.0px;font-size:12px;color:#222">Edit Crosstab</div>
<div class="t" style="left:1343px;top:1074.0px;font-size:12px;color:#222">Edit Pivot</div>
<div class="t" style="left:1343px;top:1106.0px;font-size:12px;color:#222">Edit Venn</div>
<div class="t" style="left:1343px;top:1138.0px;font-size:12px;color:#222">Education Crosstab</div>
<div class="t" style="left:1343px;top:1170.0px;font-size:12px;color:#222">English Pivot</div>
<div class="t" style="left:1343px;top:1202.0px;font-size:12px;color:#222">First Names</div>
<div class="t" style="left:1343px;top:1234.0px;font-size:12px;color:#222">High Value/Lengthy Commute Intersect</div>
<div class="t" style="left:1343px;top:1266.0px;font-size:12px;color:#222">Map Time Nice Nice</div>
<div class="t" style="left:1343px;top:1298.0px;font-size:12px;color:#222">Mike Pivot</div>
<div class="t" style="left:1343px;top:1330.0px;font-size:12px;color:#222">Occupation vs. Education</div>
<!-- BOTTOM -->

<!-- left bottom card -->
<div class="a" style="left:29px;top:1032.5px;width:402px;height:336px;background:#fff;border-radius:3px 3px 0 0;box-shadow:0 0 3px rgba(0,0,0,.18)"></div>
<div class="a" style="left:29px;top:1076px;width:402px;height:1.5px;background:#ebebeb"></div>
<div class="t" style="left:47px;top:1046.2px;font-size:18px;letter-spacing:0.24px;color:#34495a;-webkit-text-stroke:0.45px #34495a">Target Demographics (Edu...</div>
<!-- right bottom card -->
<div class="a" style="left:446.5px;top:1032.5px;width:820.5px;height:336px;background:#fff;border-radius:3px 3px 0 0;box-shadow:0 0 3px rgba(0,0,0,.18)"></div>
<div class="a" style="left:446.5px;top:1076px;width:820.5px;height:1.5px;background:#ebebeb"></div>
<div class="t" style="left:465px;top:1046px;font-size:18px;letter-spacing:0.8px;color:#34495a;-webkit-text-stroke:0.45px #34495a">High Value/Lengthy Commute Intersect</div>
<div class="a" style="left:0;top:1368px;width:1290px;height:12px;background:#f7f7f7"></div>
<svg style="left:0;top:0;overflow:hidden" width="1300" height="1368">
<g id="ext"><path d="M312.5 1046.5 H306.5 V1063 H324 V1056.5" fill="none" stroke="#6b7379" stroke-width="1.8"/><path d="M315 1055 L324 1046 M318 1045.5 H324.5 V1052" fill="none" stroke="#2f7dd0" stroke-width="1.8"/></g>
<path d="M346 1046.5 L354 1054.5 L346 1062.5" fill="none" stroke="#8a959e" stroke-width="1.6"/>
<circle cx="380" cy="1048" r="1.9" fill="#7d8992"/><circle cx="380" cy="1054.5" r="1.9" fill="#7d8992"/><circle cx="380" cy="1061" r="1.9" fill="#7d8992"/>
<path d="M400.5 1047 L415.5 1062 M415.5 1047 L400.5 1062" stroke="#8a8a8a" stroke-width="1.8"/>
<use href="#ext" x="800"/>
<path d="M1152.6 1062.5 A7.3 7.3 0 1 1 1157.6 1058" stroke="#12a64c" stroke-width="2.2" fill="none" stroke-linecap="round"/><path d="M1154 1056.5 L1160 1060.3 L1155 1062.1 Z" fill="#12a64c" stroke="#12a64c" stroke-width="0.8" stroke-linejoin="round"/>
<path d="M1183 1047 L1190.5 1054.5 L1183 1062" fill="none" stroke="#8a959e" stroke-width="1.6"/>
<circle cx="1215.5" cy="1048" r="1.9" fill="#7d8992"/><circle cx="1215.5" cy="1054.5" r="1.9" fill="#7d8992"/><circle cx="1215.5" cy="1061" r="1.9" fill="#7d8992"/>
<path d="M1237.5 1047.5 L1252.5 1062.5 M1252.5 1047.5 L1237.5 1062.5" stroke="#8a8a8a" stroke-width="1.8"/>
<!-- DB realtime icon -->
<g fill="none" stroke="#6d7378" stroke-width="4.2"><circle cx="224" cy="1183" r="20.5"/><path d="M203.5 1175 H244 M203.5 1191 H236 M217 1163 V1203 M231 1163 V1200"/></g>
<g fill="#1f77c8"><ellipse cx="248" cy="1193" rx="12.5" ry="5"/><path d="M235.5 1197 Q248 1203 260.5 1197 V1202 Q248 1208 235.5 1202 Z"/><path d="M235.5 1205 Q248 1211 260.5 1205 V1210 Q248 1216 235.5 1210 Z"/></g>
<path d="M235.5 1196 Q248 1202 260.5 1196" stroke="#fff" stroke-width="1.2" fill="none"/>
<!-- version icons -->
<use href="#vicons" x="-697.5" y="1036"/>
<path d="M280 1320.5 L287.5 1328 L280 1335.5" fill="none" stroke="#86919a" stroke-width="1.5"/>
<!-- venn -->
<circle cx="711.8" cy="1253.8" r="132.5" fill="#8080ff"/>
<circle cx="879" cy="1253.8" r="132.5" fill="#80c080"/>
<clipPath id="cl"><circle cx="711.8" cy="1253.8" r="132.5"/></clipPath>
<circle cx="879" cy="1253.8" r="132.5" fill="#408080" clip-path="url(#cl)"/>
<circle cx="711.8" cy="1253.8" r="132.5" fill="none" stroke="#000" stroke-width="6"/>
<circle cx="879" cy="1253.8" r="132.5" fill="none" stroke="#000" stroke-width="6"/>
<rect x="1143.7" y="1102.6" width="5.5" height="33.6" rx="2.7" fill="#0000ee"/>
<rect x="1143.7" y="1152.5" width="5.5" height="34.2" rx="2.7" fill="#0a7d0a"/>
</svg>
<div class="t" style="left:124.5px;top:1235px;font-size:16.9px;color:#7d8a94;-webkit-text-stroke:0.2px #7d8a94">Database Realtime Decision</div>
<div class="t" style="left:144.3px;top:1285px;font-size:13px;color:#222;letter-spacing:-0.2px">v0.1</div>
<div class="t" style="left:175.5px;top:1320.5px;font-size:14.1px;color:#86919a">Click to expand</div>
<div class="t" style="left:669px;top:1092px;font-size:18.6px;color:#111;-webkit-text-stroke:0.15px #111">High Value</div>
<div class="t" style="left:591px;top:1230px;font-size:49px;color:#000;letter-spacing:-0.6px">15,990</div>
<div class="t" style="left:754.5px;top:1237.5px;font-size:36px;color:#000;letter-spacing:-1px">2,494</div>
<div class="t" style="left:864.5px;top:1231px;font-size:52px;color:#000;letter-spacing:-0.8px">2,494</div>
<div class="a" style="left:1268px;top:1033px;width:12px;height:335px;background:#f7f7f7"></div>
<div class="t" style="left:1158px;top:1102.5px;font-size:19px;color:#111;-webkit-text-stroke:0.5px #111;letter-spacing:0.4px">18,484</div>
<div class="t" style="left:1158px;top:1127px;font-size:11.3px;color:#9a9a9a">High Value</div>
<div class="t" style="left:1158px;top:1152.5px;font-size:19px;color:#111;-webkit-text-stroke:0.5px #111;letter-spacing:0.4px">4,988</div>
<div class="t" style="left:1158px;top:1177px;font-size:11.2px;color:#9a9a9a">Commute 10+</div>

</body></html>
